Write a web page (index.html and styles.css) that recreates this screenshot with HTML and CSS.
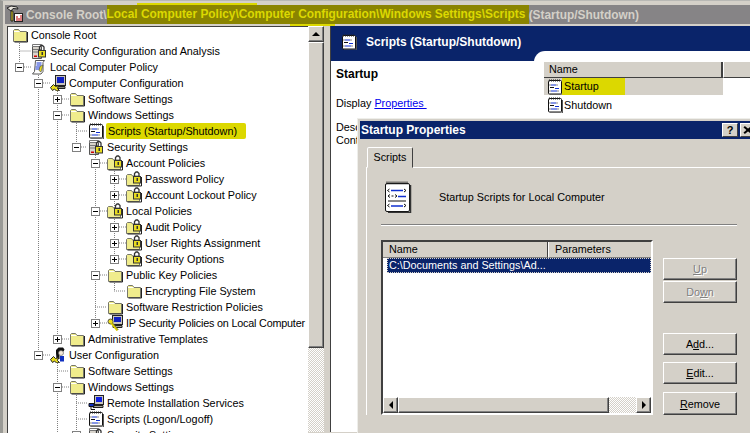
FILE: index.html
```html
<!DOCTYPE html>
<html lang="en">
<head>
    <meta charset="UTF-8">
    <meta name="viewport" content="width=device-width, initial-scale=1.0">
    <title>Group Policy</title>
    <link rel="stylesheet" href="styles.css">
</head>
<body>
    <svg class="defs" width="0" height="0">
        <defs>
            <symbol id="folder" viewBox="0 0 16 16">
                <path d="M1.500 14.500V3.500l1-1h4l1.500 2h6.500v10z" fill="#F0EC8C" stroke="#77776a"/>
                <path d="M2 4.500h5.500" stroke="#fff" fill="none"/>
                <path d="M15.500 5v10H2.500" stroke="#222" fill="none"/>
            </symbol>
            <symbol id="lockfolder" viewBox="0 0 16 16">
                <path d="M.5 14.500V4.500l1-1h4l1 1.500h7v9.500z" fill="#F0EC8C" stroke="#77776a"/>
                <path d="M15.500 6v9H1.500" stroke="#222" fill="none"/>
                <path d="M8.500 5V2.500l1.500-1.500h1.500L13 2.500V5" stroke="#333" stroke-width="1.300" fill="none"/>
                <rect x="7.500" y="5.500" width="7" height="6.500" fill="#e8dc20" stroke="#333"/>
                <rect x="10.500" y="7" width="1.500" height="3" fill="#333"/>
            </symbol>
            <symbol id="script" viewBox="0 0 16 16">
                <rect x="1.500" y="1.500" width="13" height="13.500" rx="1" fill="#fff" stroke="#111"/>
                <path d="M15.500 3v13H3" stroke="#555" fill="none"/>
                <path d="M2.500 .5v2M4.500 .5v2M6.500 .5v2M8.500 .5v2M10.500 .5v2M12.500 .5v2" stroke="#222"/>
                <path d="M3 5.500l-.5.500.5.500M10 5.500l.5.500-.5.500M3 11.500l-.5.500.5.500M11 11.500l.5.500-.5.500" stroke="#111" fill="none"/>
                <path d="M4 6h5M4 12h6" stroke="#1030d0" stroke-width="1.200"/>
                <path d="M3 8.500h4" stroke="#111"/>
                <path d="M8 9.500h4" stroke="#1030d0"/>
            </symbol>
            <symbol id="server" viewBox="0 0 16 16">
                <path d="M1.500 3.500h9v12h-9z" fill="#d8d4cc" stroke="#555"/>
                <path d="M1.500 1.500h9v2h-9zM2 6.500h8M2 9h8" fill="#fff" stroke="#777"/>
                <rect x="3" y="12.500" width="3" height="1.500" fill="#d00000"/>
                <path d="M8.500 7.500V4l1.500-1.500h1.500L13 4v3.500" stroke="#333" stroke-width="1.300" fill="none"/>
                <rect x="7.500" y="7.500" width="7" height="6.500" fill="#e8dc20" stroke="#333"/>
                <rect x="10.500" y="9" width="1.500" height="3" fill="#333"/>
            </symbol>
            <symbol id="policy" viewBox="0 0 16 16">
                <path d="M4.500 1.500h9l-1.500 2v9l-2 2.500H1.500l2-2.500z" fill="#fff" stroke="#555"/>
                <path d="M5.500 4h5M5.500 6h5M4.500 8h5M4.500 10h5" stroke="#1030d0"/>
                <path d="M9 7.500l3-1.500-2 7-2-1.500z" fill="#e8dc20" stroke="#444" stroke-width=".6"/>
            </symbol>
            <symbol id="computer" viewBox="0 0 16 16">
                <rect x="5.500" y=".5" width="10" height="10" fill="#c8c4bc" stroke="#222"/>
                <rect x="7" y="2" width="7" height="6" fill="#1020c0"/>
                <path d="M6 11.500h9v2H6z" fill="#8a8a80" stroke="#222"/>
                <path d="M.5 12.500l3-3 2 2 3-1-1 3 2 2-3 .5-2-2-2 1.500z" fill="#e8dc20" stroke="#222"/>
            </symbol>
            <symbol id="user" viewBox="0 0 16 16">
                <path d="M6 6V3l2.500-2.500H13l1.500 2-1 2-3-.5-1 2v6H6.500z" fill="#111"/>
                <circle cx="11" cy="6" r="2.500" fill="#f4e8d8" stroke="#555" stroke-width=".6"/>
                <path d="M10 9h4v5.500h-4z" fill="#1030c0"/>
                <path d="M.5 12.500l3-3 2 2 3-1-1 3 2 2-3 .5-2-2-2 1.500z" fill="#e8dc20" stroke="#222"/>
            </symbol>
            <symbol id="ipkey" viewBox="0 0 16 16">
                <rect x="5.500" y=".5" width="10" height="9" fill="#c8c4bc" stroke="#222"/>
                <rect x="7" y="2" width="7" height="5" fill="#1020c0"/>
                <path d="M6 10.500h9v2H6z" fill="#a8a89c" stroke="#222"/>
                <circle cx="3.500" cy="6.500" r="2.500" fill="#f0e020" stroke="#554"/>
                <path d="M4.500 8l6 7.500" stroke="#d8c800" stroke-width="2.200"/>
                <path d="M5.500 8l6 7" stroke="#554" stroke-width=".6"/>
            </symbol>
            <symbol id="remote" viewBox="0 0 16 16">
                <rect x="6.500" y=".5" width="9" height="9" fill="#c8c4bc" stroke="#222"/>
                <rect x="8" y="2" width="6" height="5" fill="#1020e0"/>
                <path d="M5 10.500h10v2H5z" fill="#a8a89c" stroke="#222"/>
                <path d="M1 8.500h5v3H1z" fill="#1030c0" stroke="#111"/>
                <path d="M3 11.500v3h4" stroke="#111" fill="none"/>
            </symbol>
            <symbol id="bigscript" viewBox="0 0 28 32">
                <rect x="1.500" y="2.500" width="24" height="28" rx="1.500" fill="#fff" stroke="#111"/>
                <path d="M26.500 4v27.500H4" stroke="#333" stroke-width="1.500" fill="none"/>
                <path d="M3 .5v3M5 .5v3M7 .5v3M9 .5v3M11 .5v3M13 .5v3M15 .5v3M17 .5v3M19 .5v3M21 .5v3M23 .5v3" stroke="#222"/>
                <path d="M5.500 8l-2 1.500 2 1.500M20 8l2 1.500-2 1.500M6 13.500l-2 1.500 2 1.500M11 13.500l2 1.500-2 1.500M5.500 23l-2 1.500 2 1.500M20 23l2 1.500-2 1.500" stroke="#111" fill="none"/>
                <path d="M7 9.500h12M7 25h12M14 15.500h8" stroke="#1030d0" stroke-width="1.500"/>
                <path d="M7.500 15h2M4 20h18" stroke="#111"/>
            </symbol>
        </defs>
    </svg>

    <div class="app">
        <div class="titlebar">
            <svg class="title-icon" width="18" height="18" viewBox="0 0 18 18">
                <path d="M1 3l4-2 6 1 1 2-5-.5L5 6z" fill="#e8e4dc" stroke="#222"/>
                <path d="M5 6l2 0v10H5z" fill="#e8dc20" stroke="#222"/>
                <rect x="8.500" y="8.500" width="8" height="8" fill="#fff" stroke="#222"/>
                <path d="M11 11v5M13 13v3M15 10v6" stroke="#c00000"/>
            </svg>
            <span>Console Root\</span><span class="title-mark">Local Computer Policy\Computer Configuration\Windows Settings\Scripts </span><span>(Startup/Shutdown)</span>
            <i class="stroke stroke-a"></i>
            <i class="stroke stroke-b"></i>
        </div>

        <div class="main">
            <div class="tree">
                <svg class="tree-lines" width="300" height="406" viewBox="8 27 300 406">
                    <g stroke="#808080" stroke-dasharray="1 1" fill="none">
                        <path d="M19.500 43V67M19.500 51H31M24 67H31"/>
                        <path d="M38.500 73V355M43 83H50M43 355H50"/>
                        <path d="M57.500 89V339M62 99H69M62 115H69M62 339H69M57.500 361V433M57 371H69M62 387H69"/>
                        <path d="M76.500 121V147M76 131H87M81 147H87M76.500 393V433M76 403H87M76 419H87"/>
                        <path d="M95.500 153V323M100 163H107M100 211H107M100 275H107M95 307H107M100 323H107"/>
                        <path d="M114.500 169V259M119 179H126M119 195H126M119 227H126M119 243H126M119 259H126M114.500 281V291M114 291H126"/>
                    </g>
                </svg>

                <div class="row root"><svg class="ico"><use href="#folder"/></svg><span class="label">Console Root</span></div>
                <div class="row d0"><span class="slot"></span><svg class="ico"><use href="#server"/></svg><span class="label">Security Configuration and Analysis</span></div>
                <div class="row d0"><span class="slot"><b class="exp minus"></b></span><svg class="ico"><use href="#policy"/></svg><span class="label">Local Computer Policy</span></div>
                <div class="row d1"><span class="slot"><b class="exp minus"></b></span><svg class="ico"><use href="#computer"/></svg><span class="label">Computer Configuration</span></div>
                <div class="row d2"><span class="slot"><b class="exp plus"></b></span><svg class="ico"><use href="#folder"/></svg><span class="label">Software Settings</span></div>
                <div class="row d2"><span class="slot"><b class="exp minus"></b></span><svg class="ico"><use href="#folder"/></svg><span class="label">Windows Settings</span></div>
                <div class="row d3"><span class="slot"></span><svg class="ico"><use href="#script"/></svg><span class="label marked">Scripts (Startup/Shutdown)</span></div>
                <div class="row d3"><span class="slot"><b class="exp minus"></b></span><svg class="ico"><use href="#server"/></svg><span class="label">Security Settings</span></div>
                <div class="row d4"><span class="slot"><b class="exp minus"></b></span><svg class="ico"><use href="#lockfolder"/></svg><span class="label">Account Policies</span></div>
                <div class="row d5"><span class="slot"><b class="exp plus"></b></span><svg class="ico"><use href="#lockfolder"/></svg><span class="label">Password Policy</span></div>
                <div class="row d5"><span class="slot"><b class="exp plus"></b></span><svg class="ico"><use href="#lockfolder"/></svg><span class="label">Account Lockout Policy</span></div>
                <div class="row d4"><span class="slot"><b class="exp minus"></b></span><svg class="ico"><use href="#lockfolder"/></svg><span class="label">Local Policies</span></div>
                <div class="row d5"><span class="slot"><b class="exp plus"></b></span><svg class="ico"><use href="#lockfolder"/></svg><span class="label">Audit Policy</span></div>
                <div class="row d5"><span class="slot"><b class="exp plus"></b></span><svg class="ico"><use href="#lockfolder"/></svg><span class="label">User Rights Assignment</span></div>
                <div class="row d5"><span class="slot"><b class="exp plus"></b></span><svg class="ico"><use href="#lockfolder"/></svg><span class="label">Security Options</span></div>
                <div class="row d4"><span class="slot"><b class="exp minus"></b></span><svg class="ico"><use href="#folder"/></svg><span class="label">Public Key Policies</span></div>
                <div class="row d5"><span class="slot"></span><svg class="ico"><use href="#folder"/></svg><span class="label">Encrypting File System</span></div>
                <div class="row d4"><span class="slot"></span><svg class="ico"><use href="#folder"/></svg><span class="label">Software Restriction Policies</span></div>
                <div class="row d4"><span class="slot"><b class="exp plus"></b></span><svg class="ico"><use href="#ipkey"/></svg><span class="label tight">IP Security Policies on Local Computer</span></div>
                <div class="row d2"><span class="slot"><b class="exp plus"></b></span><svg class="ico"><use href="#folder"/></svg><span class="label">Administrative Templates</span></div>
                <div class="row d1"><span class="slot"><b class="exp minus"></b></span><svg class="ico"><use href="#user"/></svg><span class="label">User Configuration</span></div>
                <div class="row d2"><span class="slot"></span><svg class="ico"><use href="#folder"/></svg><span class="label">Software Settings</span></div>
                <div class="row d2"><span class="slot"><b class="exp minus"></b></span><svg class="ico"><use href="#folder"/></svg><span class="label">Windows Settings</span></div>
                <div class="row d3"><span class="slot"></span><svg class="ico"><use href="#remote"/></svg><span class="label">Remote Installation Services</span></div>
                <div class="row d3"><span class="slot"></span><svg class="ico"><use href="#script"/></svg><span class="label">Scripts (Logon/Logoff)</span></div>
                <div class="row d3"><span class="slot"><b class="exp minus"></b></span><svg class="ico"><use href="#server"/></svg><span class="label">Security Settings</span></div>
            </div>

            <div class="vscroll">
                <div class="sb-btn"><i class="arrow up"></i></div>
                <div class="sb-thumb"></div>
                <div class="sb-track"></div>
            </div>

            <div class="detail">
                <div class="detail-head">
                    <svg class="ico"><use href="#script"/></svg>
                    <span>Scripts (Startup/Shutdown)</span>
                </div>
                <div class="detail-body">
                    <div class="detail-left">
                        <h3>Startup</h3>
                        <p class="display">Display <a href="#">Properties&nbsp;</a></p>
                        <p class="desc">Desc<br>Cont</p>
                    </div>
                    <div class="detail-list">
                        <div class="list-head"><span class="col-name">Name</span><span class="col-rest"></span></div>
                        <div class="list-row selected"><svg class="ico"><use href="#script"/></svg><span class="marked-row">Startup</span></div>
                        <div class="list-row"><svg class="ico"><use href="#script"/></svg><span>Shutdown</span></div>
                    </div>
                </div>
            </div>
        </div>
    </div>

    <div class="dialog">
        <div class="dialog-title">
            <span>Startup Properties</span>
            <div class="caption-btns">
                <b class="caption-btn">?</b>
                <b class="caption-btn close"></b>
            </div>
        </div>
        <div class="tabs"><div class="tab">Scripts</div></div>
        <div class="pane">
            <div class="pane-head">
                <svg class="big-icon"><use href="#bigscript"/></svg>
                <span>Startup Scripts for Local Computer</span>
            </div>
            <div class="sep"></div>
            <div class="pane-main">
                <div class="scripts">
                    <div class="scripts-head"><span class="sh-name">Name</span><span class="sh-param">Parameters</span></div>
                    <div class="scripts-body">
                        <div class="scripts-row"><span>C:\Documents and Settings\Ad...</span></div>
                    </div>
                    <div class="hscroll">
                        <div class="hs-btn"><i class="arrow left"></i></div>
                        <div class="hs-thumb"></div>
                        <div class="hs-track"></div>
                        <div class="hs-btn"><i class="arrow right"></i></div>
                    </div>
                </div>
                <div class="actions">
                    <button class="btn off btn-up"><u>U</u>p</button>
                    <button class="btn off">Do<u>w</u>n</button>
                    <button class="btn btn-add">A<u>d</u>d...</button>
                    <button class="btn btn-edit"><u>E</u>dit...</button>
                    <button class="btn btn-remove"><u>R</u>emove</button>
                </div>
            </div>
        </div>
    </div>
</body>
</html>
```

FILE: styles.css
```css
html, body {
    margin: 0;
    padding: 0;
    width: 750px;
    height: 433px;
    overflow: hidden;
}

body {
    position: relative;
    background-color: #D4D0C8;
    font-family: "Liberation Sans", Arial, sans-serif;
    font-size: 10.8px;
    color: #000;
}

.defs {
    position: absolute;
}

.app {
    height: 433px;
    padding-top: 2px;
    box-sizing: border-box;
    border-left: 3px solid #9a9a96;
    border-top: 1px solid #b8b8b4;
    display: flex;
    flex-direction: column;
}

/* title bar */
.titlebar {
    position: relative;
    height: 19px;
    margin: 2px 0 0 2px;
    padding-left: 21px;
    display: flex;
    align-items: center;
    background-color: #868486;
    color: #D4D0C8;
    font-size: 11.9px;
    font-weight: bold;
    white-space: pre;
}

.title-icon {
    position: absolute;
    left: 1px;
    top: 0;
}

.title-mark {
    height: 19px;
    line-height: 19px;
    background-color: #8A8400;
    color: #DCD800;
}

.stroke {
    position: absolute;
    background-color: #DCD800;
}

.stroke-a {
    left: 132px;
    top: -2px;
    width: 120px;
    height: 2px;
}

.stroke-b {
    left: 285px;
    top: 19px;
    width: 45px;
    height: 2px;
}

.main {
    flex: 1;
    min-height: 0;
    display: flex;
    margin-top: 2px;
    margin-left: 4px;
}

/* tree */
.tree {
    position: relative;
    width: 300px;
    height: 406px;
    flex: none;
    overflow: hidden;
    background-color: #fff;
    border-left: 1px solid #404040;
    border-top: 1px solid #404040;
}

.tree-lines {
    position: absolute;
    left: 0;
    top: 0;
}

.row {
    position: relative;
    height: 16px;
    display: flex;
    align-items: center;
    white-space: nowrap;
}

.root { padding-left: 4px; }
.d0 { padding-left: 4px; }
.d1 { padding-left: 23px; }
.d2 { padding-left: 42px; }
.d3 { padding-left: 61px; }
.d4 { padding-left: 80px; }
.d5 { padding-left: 99px; }

.slot {
    width: 19px;
    flex: none;
    display: flex;
    align-items: center;
}

.exp {
    position: relative;
    width: 9px;
    height: 9px;
    margin-left: 3px;
    box-sizing: border-box;
    border: 1px solid #808080;
    background-color: #fff;
}

.exp::before {
    content: "";
    position: absolute;
    left: 1px;
    top: 3px;
    width: 5px;
    height: 1px;
    background-color: #000;
}

.plus::after {
    content: "";
    position: absolute;
    left: 3px;
    top: 1px;
    width: 1px;
    height: 5px;
    background-color: #000;
}

.ico {
    width: 16px;
    height: 16px;
    flex: none;
    margin-right: 3px;
}

.label {
    line-height: 16px;
}

.tight {
    letter-spacing: -0.2px;
}

.marked {
    margin-left: -1px;
    padding: 0 9px 0 2px;
    background-color: #DCD800;
    border-radius: 2px;
}

/* scrollbar next to the tree */
.vscroll {
    width: 16px;
    height: 406px;
    display: flex;
    flex-direction: column;
    flex: none;
}

.sb-btn,
.sb-thumb,
.hs-btn,
.hs-thumb {
    box-sizing: border-box;
    background-color: #D4D0C8;
    border: 1px solid;
    border-color: #fff #404040 #404040 #fff;
    box-shadow: inset -1px -1px #808080;
}

.sb-btn {
    height: 16px;
    display: flex;
    align-items: center;
    justify-content: center;
}

.sb-thumb {
    height: 306px;
}

.sb-track,
.hs-track {
    flex: 1;
    background-image: conic-gradient(#D4D0C8 25%, #fff 0 50%, #D4D0C8 0 75%, #fff 0);
    background-size: 2px 2px;
}

.arrow {
    width: 0;
    height: 0;
    border: 4px solid transparent;
}

.arrow.up {
    border-top-width: 0;
    border-bottom-color: #000;
}

.arrow.left {
    border-left-width: 0;
    border-right-color: #000;
}

.arrow.right {
    border-right-width: 0;
    border-left-color: #000;
}

/* right side */
.detail {
    flex: none;
    width: 420px;
    margin-left: 6px;
    height: 406px;
    background-color: #fff;
    border-left: 1px solid #404040;
}

.detail-head {
    height: 35px;
    padding: 0 0 4px 10px;
    box-sizing: border-box;
    display: flex;
    align-items: center;
    background-color: #0A246A;
    color: #fff;
    font-size: 12px;
    font-weight: bold;
}

.detail-head .ico {
    margin-right: 9px;
}

.detail-body {
    display: flex;
}

.detail-left {
    width: 203px;
    flex: none;
    padding-left: 5px;
    box-sizing: border-box;
    overflow: hidden;
    white-space: nowrap;
}

.detail-left h3 {
    margin: 5px 0 0;
    font-size: 12px;
    line-height: 16px;
}

.display {
    margin: 13px 0 0;
    line-height: 16px;
}

.display a {
    color: #0000EE;
}

.desc {
    margin: 10px 0 0;
    line-height: 13px;
}

.detail-list {
    flex: 1;
    margin-top: -10px;
    padding: 11px 0 0 10px;
    background-color: #fff;
    border-top-left-radius: 11px;
}

.list-head {
    height: 16px;
    display: flex;
}

.col-name,
.col-rest {
    box-sizing: border-box;
    background-color: #D4D0C8;
    border-bottom: 1px solid #404040;
    line-height: 15px;
}

.col-name {
    width: 179px;
    padding-left: 5px;
    border-right: 2px solid #404040;
}

.col-rest {
    flex: 1;
    border-left: 1px solid #fff;
}

.list-row {
    width: 179px;
    height: 17px;
    padding-left: 3px;
    box-sizing: border-box;
    display: flex;
    align-items: center;
}

.list-row .ico {
    margin-right: 1px;
}

.selected {
    background-color: #D4D0C8;
}

.list-row + .list-row {
    margin-top: 1px;
}

.marked-row {
    width: 63px;
    margin-left: -2px;
    padding-left: 2px;
    box-sizing: border-box;
    line-height: 17px;
    background-color: #DCD800;
}

/* dialog over the right side */
.dialog {
    position: absolute;
    left: 357px;
    top: 118px;
    width: 400px;
    height: 330px;
    box-sizing: border-box;
    padding: 3px 0 0 3px;
    background-color: #D4D0C8;
    border-left: 1px solid #eeeeea;
    border-top: 1px solid #eeeeea;
}

.dialog-title {
    height: 18px;
    margin-top: -1px;
    margin-left: -1px;
    padding-left: 1px;
    display: flex;
    align-items: center;
    background-color: #0A246A;
    color: #fff;
    font-size: 12px;
    font-weight: bold;
}

.caption-btns {
    position: absolute;
    left: 364px;
    top: 4px;
    display: flex;
    gap: 2px;
}

.caption-btn {
    position: relative;
    width: 16px;
    height: 14px;
    box-sizing: border-box;
    border: 1px solid;
    border-color: #fff #404040 #404040 #fff;
    background-color: #D4D0C8;
    color: #000;
    font-size: 11px;
    line-height: 12px;
    text-align: center;
}

.close::before,
.close::after {
    content: "";
    position: absolute;
    left: 2px;
    top: 5px;
    width: 10px;
    height: 2px;
    background-color: #000;
    transform: rotate(40deg);
}

.close::after {
    transform: rotate(-40deg);
}

.tabs {
    height: 21px;
    margin-top: 8px;
    padding-left: 6px;
}

.tab {
    width: 46px;
    height: 21px;
    box-sizing: border-box;
    position: relative;
    z-index: 1;
    background-color: #D4D0C8;
    border: 1px solid;
    border-color: #fff #404040 transparent #fff;
    border-radius: 2px 2px 0 0;
    text-align: center;
    line-height: 19px;
}

.pane {
    margin-left: 5px;
    margin-top: -1px;
    padding: 13px 0 0 14px;
    border-left: 1px solid #fff;
    border-top: 1px solid #fff;
}

.pane-head {
    height: 32px;
    padding-left: 3px;
    display: flex;
    align-items: center;
}

.big-icon {
    width: 28px;
    height: 32px;
    margin-right: 27px;
}

.sep {
    width: 356px;
    height: 1px;
    margin-top: 11px;
    background-color: #808080;
    border-bottom: 1px solid #fff;
}

.pane-main {
    display: flex;
    margin-top: 14px;
}

.scripts {
    width: 272px;
    height: 175px;
    box-sizing: border-box;
    display: flex;
    flex-direction: column;
    background-color: #fff;
    border: 2px solid;
    border-color: #404040 #fff #fff #404040;
}

.scripts-head {
    height: 16px;
    flex: none;
    display: flex;
    line-height: 15px;
}

.sh-name,
.sh-param {
    box-sizing: border-box;
    background-color: #D4D0C8;
    padding-left: 6px;
    border-bottom: 1px solid #808080;
}

.sh-name {
    width: 165px;
    border-right: 1px solid #404040;
}

.sh-param {
    flex: 1;
    border-left: 1px solid #fff;
}

.scripts-body {
    flex: 1;
}

.scripts-row {
    height: 15px;
    margin-left: 4px;
    padding-left: 2px;
    box-sizing: border-box;
    background-color: #0A246A;
    color: #fff;
    outline: 1px dotted #D4D0C8;
    outline-offset: -1px;
    line-height: 15px;
}

.hscroll {
    height: 16px;
    flex: none;
    display: flex;
}

.hs-btn {
    width: 15px;
    display: flex;
    align-items: center;
    justify-content: center;
}

.hs-thumb {
    width: 211px;
}

.actions {
    width: 74px;
    margin-left: 10px;
    display: flex;
    flex-direction: column;
}

.btn {
    width: 74px;
    height: 22px;
    padding: 0;
    box-sizing: border-box;
    background-color: #D4D0C8;
    border: 1px solid;
    border-color: #fff #404040 #404040 #fff;
    box-shadow: inset -1px -1px #808080;
    font-family: inherit;
    font-size: 10.8px;
    color: #000;
}

.off {
    color: #808080;
    text-shadow: 1px 1px #fff;
}

.btn-up {
    margin-top: 18px;
    margin-bottom: 1px;
}

.btn-add {
    margin-top: 30px;
}

.btn-edit {
    margin-top: 7px;
}

.btn-remove {
    margin-top: 8px;
    height: 23px;
}
```
